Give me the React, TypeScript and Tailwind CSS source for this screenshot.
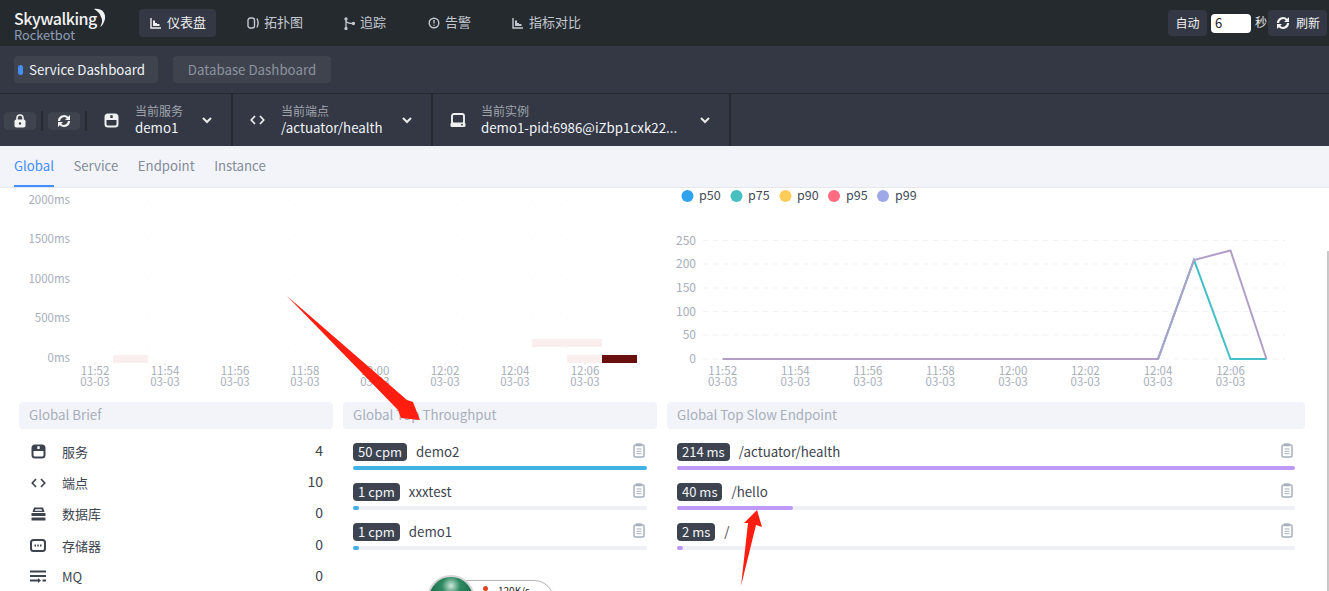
import React from "react";

const font = "font-['Noto_Sans_CJK_SC','Noto_Sans',sans-serif]";

const ChartIcon = () => (
  <svg width="12" height="12" viewBox="0 0 12 12" className="shrink-0" fill="none">
    <path d="M1 1v10h10" stroke="currentColor" strokeWidth="1.4" />
    <path d="M3 9V3.5h2V6h2v1h2.5v2z" fill="currentColor" />
  </svg>
);
const TopoIcon = () => (
  <svg width="12" height="12" viewBox="0 0 12 12" className="shrink-0" fill="none" stroke="currentColor" strokeWidth="1.4">
    <rect x="1" y="1" width="6.5" height="10" rx="2.2" />
    <path d="M10 1.5c1.2 2.5 1.2 6.5 0 9" />
  </svg>
);
const TraceIcon = () => (
  <svg width="11" height="13" viewBox="0 0 11 13" className="shrink-0" fill="none" stroke="currentColor" strokeWidth="1.3">
    <path d="M2 1v11M2 4c1 2 4 2.500 7 2.500" />
    <circle cx="2" cy="2" r="1" fill="currentColor" />
    <circle cx="2" cy="11.500" r="1" fill="currentColor" />
    <circle cx="9.500" cy="6.500" r="1" fill="currentColor" />
  </svg>
);
const AlertIcon = () => (
  <svg width="12" height="12" viewBox="0 0 12 12" className="shrink-0" fill="none" stroke="currentColor" strokeWidth="1.4">
    <circle cx="6" cy="6" r="4.800" />
    <path d="M6 3v3.500M6 7.800v1" />
  </svg>
);
const RefreshIcon = ({ size = 14 }: { size?: number }) => (
  <svg width={size} height={size} viewBox="0 0 14 14" className="shrink-0" fill="none" stroke="currentColor" strokeWidth="2.200">
    <path d="M2 7a5 5 0 0 1 8.500-3.500L12 5" />
    <path d="M12 7a5 5 0 0 1-8.500 3.500L2 9" />
    <path d="M13 1v5H8z" fill="currentColor" stroke="none" />
    <path d="M1 13V8h5z" fill="currentColor" stroke="none" />
  </svg>
);
const LockIcon = () => (
  <svg width="12" height="14" viewBox="0 0 12 14" fill="none">
    <path d="M3 6V4a3 3 0 0 1 6 0v2" stroke="currentColor" strokeWidth="1.600" />
    <rect x="0.500" y="5.500" width="11" height="8" rx="1.800" fill="currentColor" />
    <circle cx="6" cy="9.500" r="1.200" fill="#3e434e" />
  </svg>
);
const ServiceIcon = () => (
  <svg width="15" height="15" viewBox="0 0 15 15" fill="none" className="shrink-0">
    <path
      fillRule="evenodd"
      clipRule="evenodd"
      fill="currentColor"
      d="M4 0.500h7a3.500 3.500 0 0 1 3.500 3.500v7a3.500 3.500 0 0 1-3.500 3.500H4A3.500 3.500 0 0 1 .5 11V4A3.500 3.500 0 0 1 4 .5zM6.300 2.300v2.700h2.400v-2.700zM2.500 7v4A1.500 1.500 0 0 0 4 12.500h7A1.500 1.500 0 0 0 12.500 11V7z"
    />
  </svg>
);
const CodeIcon = () => (
  <svg width="15" height="10" viewBox="0 0 15 10" fill="none" stroke="currentColor" strokeWidth="1.700" className="shrink-0">
    <path d="M5 1 1.300 5 5 9M10 1l3.700 4L10 9" />
  </svg>
);
const InstanceIcon = () => (
  <svg width="16" height="15" viewBox="0 0 16 15" fill="none" className="shrink-0">
    <rect x="2" y="1" width="12" height="10" rx="2" stroke="currentColor" strokeWidth="1.900" />
    <rect x="0.500" y="9.500" width="15" height="4.500" rx="1.500" fill="currentColor" />
    <circle cx="12" cy="11.700" r="0.900" fill="#333844" />
  </svg>
);
const DatabaseIcon = () => (
  <svg width="15" height="14" viewBox="0 0 15 14" fill="currentColor" className="shrink-0">
    <path d="M3 0.500h9l1.500 4.500h-12z" />
    <rect x="0.500" y="6" width="14" height="3" rx="0.500" />
    <rect x="0.500" y="10.500" width="14" height="3" rx="0.500" />
    <path d="M4.500 2.200h6l.6 1.500H3.900z" fill="#fff" />
  </svg>
);
const StorageIcon = () => (
  <svg width="16" height="13" viewBox="0 0 16 13" fill="none" className="shrink-0">
    <rect x="1" y="1" width="14" height="11" rx="2.500" stroke="currentColor" strokeWidth="2" />
    <path d="M4.500 6.500h1.500M7.300 6.500h1.500M10 6.500h1.500" stroke="currentColor" strokeWidth="1.800" />
  </svg>
);
const MqIcon = () => (
  <svg width="16" height="13" viewBox="0 0 16 13" fill="currentColor" className="shrink-0">
    <rect x="0" y="0.500" width="16" height="2" />
    <rect x="0" y="5" width="16" height="2" />
    <rect x="0" y="9.500" width="8.500" height="2" />
    <path d="M8 8l3 2.500L8 13z" />
    <rect x="12.500" y="9.500" width="3.500" height="2" />
  </svg>
);
const ClipIcon = () => (
  <svg width="12" height="15" viewBox="0 0 12 15" fill="none" stroke="#a7aebb" className="shrink-0">
    <rect x="1" y="2" width="10" height="12" rx="1.500" strokeWidth="1.500" />
    <rect x="3.500" y="0.700" width="5" height="2.300" fill="#a7aebb" strokeWidth="0.500" />
    <path d="M3.500 6h5M3.500 8.300h5M3.500 10.600h5" strokeWidth="1" />
  </svg>
);
const Chevron = () => (
  <svg width="10" height="7" viewBox="0 0 10 7" fill="none" stroke="currentColor" strokeWidth="2" className="shrink-0">
    <path d="M1 1l4 4 4-4" />
  </svg>
);

const navs = [
  { label: "仪表盘", icon: <ChartIcon />, active: true, cls: "w-[77px] mr-[20px]" },
  { label: "拓扑图", icon: <TopoIcon />, active: false, cls: "w-[78px] mr-[19px]" },
  { label: "追踪", icon: <TraceIcon />, active: false, cls: "w-[66px] mr-[18px]" },
  { label: "告警", icon: <AlertIcon />, active: false, cls: "w-[66px] mr-[18px]" },
  { label: "指标对比", icon: <ChartIcon />, active: false, cls: "w-[92px]" },
];

function TopBar() {
  return (
    <div className="flex h-[46px] items-center bg-[#252a2f] text-[13px] leading-[18px] text-[#c4c8d0]">
      <div className="relative ml-[14px] h-[46px] w-[125px] shrink-0">
        <div className="absolute left-0 top-[6px] text-[16px] font-medium leading-[24px] tracking-[-0.5px] text-[#f2f2f2]">Skywalking</div>
        <svg className="absolute left-[76px] top-[8px]" width="17" height="21" viewBox="0 0 17 21">
          <path d="M4 1c7-1 12 3 11 10-1 4-3 7-5 8 2-3 3-7 1-10C10 5 7 3 4 1z" fill="#f2f2f2" />
        </svg>
        <div className="absolute left-0 top-[26px] text-[12.800px] leading-[17px] text-[#8e9eb6]">Rocketbot</div>
      </div>
      {navs.map((n) => (
        <div
          key={n.label}
          className={`flex h-[28px] shrink-0 items-center gap-[5px] rounded pl-[11px] ${n.cls} ${n.active ? "bg-[#333844] text-[#eeeeee]" : ""}`}
        >
          {n.icon}
          <span className="-translate-y-[1px]">{n.label}</span>
        </div>
      ))}
      <div className="ml-auto flex items-center pr-[2px]">
        <div className="flex h-[26px] w-[39px] items-center justify-center rounded bg-[#333844] text-[12px] text-[#f2f2f2]">自动</div>
        <div className="ml-[4px] flex h-[19px] w-[40px] items-center rounded-sm bg-white pl-[4px] text-[13px] text-[#222]">6</div>
        <span className="ml-[4px] w-[13px] -translate-y-[1px] text-[12px] text-[#e5e5e5]">秒</span>
        <div className="flex h-[26px] w-[59px] items-center gap-[6px] rounded bg-[#333844] pl-[8px] text-[12px] text-[#f2f2f2]">
          <RefreshIcon />
          <span>刷新</span>
        </div>
      </div>
    </div>
  );
}

function DashTabs() {
  return (
    <div className="flex h-[47px] items-center gap-[15px] bg-[#333844] pl-[14px] text-[13.300px] leading-[20px]">
      <div className="flex h-[27px] w-[144px] items-center rounded bg-[#3e434e] pl-[4px] text-[#f2f5fa]">
        <span className="mr-[6px] h-[10px] w-[5px] rounded-sm bg-[#448dfe]" />
        <span>Service Dashboard</span>
      </div>
      <div className="flex h-[27px] w-[158px] items-center justify-center rounded bg-[#3e434e] text-[#8d939e]">Database Dashboard</div>
    </div>
  );
}

function Selector({ icon, label, value, w, pl, textW }: { icon: React.ReactNode; label: string; value: string; w: string; pl: string; textW?: string }) {
  return (
    <div className={`flex h-full shrink-0 items-center border-r-2 border-[#252a2f] ${w} ${pl}`}>
      <div className="flex w-[31px] shrink-0 items-center text-[#f0f0f0]">{icon}</div>
      <div className={`flex flex-col whitespace-nowrap pb-[2px] ${textW ?? ""}`}>
        <span className="text-[12px] leading-[16px] text-[#a0a5ae]">{label}</span>
        <span className="text-[13.300px] leading-[17px] text-[#f2f5fa]">{value}</span>
      </div>
      <span className="ml-auto mr-[19px] text-[#e8e8e8]">
        <Chevron />
      </span>
    </div>
  );
}

function SelectorBar() {
  return (
    <div className="flex h-[53px] border-t border-[#252a2f] bg-[#333844]">
      <div className="flex w-[104px] shrink-0 items-center pl-[4px] pt-[1px]">
        <div className="flex h-[18px] w-[32px] items-center justify-center rounded bg-[#3e434e] text-[#f2f2f2]">
          <LockIcon />
        </div>
        <div className="mx-[5px] h-[20px] w-[2px] bg-[#252a2f]" />
        <div className="flex h-[18px] w-[32px] items-center justify-center rounded bg-[#3e434e] text-[#f2f2f2]">
          <RefreshIcon />
        </div>
        <div className="ml-[5px] h-[20px] w-[2px] bg-[#252a2f]" />
      </div>
      <Selector icon={<ServiceIcon />} label="当前服务" value="demo1" w="w-[129px]" pl="pl-0" />
      <Selector icon={<CodeIcon />} label="当前端点" value="/actuator/health" w="w-[200px]" pl="pl-[17px]" />
      <Selector icon={<InstanceIcon />} label="当前实例" value="demo1-pid:6986@iZbp1cxk22..." w="w-[298px]" pl="pl-[17px]" textW="w-[199px]" />
    </div>
  );
}

function PageTabs() {
  const tabs = ["Global", "Service", "Endpoint", "Instance"];
  return (
    <div className="flex h-[42px] gap-[19.500px] border-b border-[#e6e7ec] bg-[#f3f4f9] pl-[14px] text-[13.200px] leading-[20px] text-[#838b99]">
      {tabs.map((t, i) => (
        <div key={t} className={`flex h-[41px] items-center ${i === 0 ? "border-b-2 border-[#448dfe] text-[#448dfe]" : "pb-[2px]"}`}>
          {t}
        </div>
      ))}
    </div>
  );
}

const axisFill = "#a7aebb";

function AxisX({ xs, ticks }: { xs: number[]; ticks?: boolean }) {
  const labels = ["11:52", "11:54", "11:56", "11:58", "12:00", "12:02", "12:04", "12:06"];
  return (
    <>
      {xs.map((x, i) => (
        <g key={x} fontSize="11.500" fill={axisFill} textAnchor="middle">
          {ticks && <line x1={x} x2={x} y1="363" y2="365" stroke="#dcdfe6" />}
          <text x={x} y="375">{labels[i]}</text>
          <text x={x} y="386">03-03</text>
        </g>
      ))}
    </>
  );
}

function HeatChart() {
  const rows: [string, number][] = [["2000ms", 204], ["1500ms", 243], ["1000ms", 283], ["500ms", 322], ["0ms", 362]];
  const cols = [113, 148, 218, 288, 358, 393, 463, 498, 532, 567, 602];
  return (
    <svg viewBox="19 188 638 212" width="638" height="212" className="block">
      {[200, 239, 279, 318, 347].map((y) =>
        cols.map((x) => <rect key={`${x}-${y}`} x={x} y={y} width="1" height="1" fill="#f4f4f4" />)
      )}
      {rows.map(([t, y]) => (
        <text key={t} x="70" y={y} fontSize="11.500" fill={axisFill} textAnchor="end">{t}</text>
      ))}
      <rect x="113" y="355" width="35" height="8" fill="#fbeeee" />
      <rect x="532" y="339" width="70" height="8" fill="#fbeeee" />
      <rect x="567" y="355" width="35" height="8" fill="#fbeeee" />
      <rect x="602" y="355" width="35" height="8" fill="#6a0f10" />
      <AxisX xs={[95, 165, 235, 305, 375, 445, 515, 585]} ticks />
    </svg>
  );
}

function LineChart() {
  const legend: [string, string, number, number][] = [
    ["p50", "#2fa3ee", 687.5, 699],
    ["p75", "#45bfc0", 736.5, 748],
    ["p90", "#ffcb59", 785.5, 797],
    ["p95", "#ff6b81", 834, 846],
    ["p99", "#9fa8e6", 883, 895],
  ];
  const rows: [string, number][] = [["250", 240.5], ["200", 264], ["150", 288], ["100", 311.5], ["50", 335], ["0", 359]];
  return (
    <svg viewBox="667 188 638 212" width="638" height="212" className="block">
      {legend.map(([t, c, cx, tx]) => (
        <g key={t}>
          <circle cx={cx} cy="196" r="6" fill={c} />
          <text x={tx} y="200" fontSize="12.500" fill="#444b57">{t}</text>
        </g>
      ))}
      {rows.map(([t, y]) => (
        <g key={t}>
          <line x1="703" x2="1285" y1={y} y2={y} stroke="#f0f1f4" strokeDasharray="5 5" />
          <text x="696" y={y + 4} fontSize="12" fill={axisFill} textAnchor="end">{t}</text>
        </g>
      ))}
      <polyline points="722.700,359 1158,359 1194,260 1230.500,359 1266.500,359" fill="none" stroke="#43bfc7" strokeWidth="2" />
      <polyline points="722.700,359 1158,359 1194,260 1230.500,250.500 1266.500,359" fill="none" stroke="#b29fc9" strokeWidth="2" />
      <AxisX xs={[722.7, 795.3, 868, 940.3, 1013, 1085.3, 1158, 1230.5]} />
    </svg>
  );
}

function CardHeader({ title }: { title: string }) {
  return <div className="flex h-[27px] items-center rounded-sm bg-[#f3f4f9] pb-[2px] pl-[10px] text-[13.300px] leading-[20px] text-[#a7aebb]">{title}</div>;
}

function Brief() {
  const rows = [
    { icon: <ServiceIcon />, label: "服务", value: "4", cls: "pl-[12px]" },
    { icon: <CodeIcon />, label: "端点", value: "10", cls: "pl-[12px]" },
    { icon: <DatabaseIcon />, label: "数据库", value: "0", cls: "pl-[12px]" },
    { icon: <StorageIcon />, label: "存储器", value: "0", cls: "pl-[11px]" },
    { icon: <MqIcon />, label: "MQ", value: "0", cls: "pl-[11px]" },
  ];
  return (
    <div>
      <CardHeader title="Global Brief" />
      <div className="flex flex-col pt-[7px] text-[14px] leading-[20px] text-[#3d444f]">
        {rows.map((r) => (
          <div key={r.label} className={`flex h-[31.300px] items-center pr-[10px] ${r.cls}`}>
            <div className={`flex shrink-0 items-center text-[#3d444f] ${r.cls === "pl-[12px]" ? "w-[31px]" : "w-[32px]"}`}>{r.icon}</div>
            <span className="text-[13px]">{r.label}</span>
            <span className="ml-auto -translate-y-[2px] text-[14px]">{r.value}</span>
          </div>
        ))}
      </div>
    </div>
  );
}

function TopList({ title, color, items }: { title: string; color: string; items: { tag: string; name: string; pct: string }[] }) {
  return (
    <div>
      <CardHeader title={title} />
      <div className="flex flex-col gap-[13px] px-[10px] pt-[14px]">
        {items.map((it) => (
          <div key={it.name}>
            <div className="flex h-[18px] items-center text-[13.300px] leading-[18px] text-[#3d444f]">
              <span className="mr-[9px] flex h-[18px] items-center rounded bg-[#3d444f] px-[5px] text-[13px] text-[#f2f5fa]">{it.tag}</span>
              <span>{it.name}</span>
              <span className="ml-auto -translate-x-[2px] -translate-y-[2px]">
                <ClipIcon />
              </span>
            </div>
            <div className="mt-[5px] h-[4px] rounded-sm bg-[#eff0f6]">
              <div className="h-full rounded-sm" style={{ width: it.pct, backgroundColor: color }} />
            </div>
          </div>
        ))}
      </div>
    </div>
  );
}

export default function App() {
  return (
    <div className={`relative h-[591px] w-[1329px] overflow-hidden bg-white ${font}`}>
      <TopBar />
      <DashTabs />
      <SelectorBar />
      <PageTabs />
      <div className="grid grid-cols-[314px_314px_638px] gap-x-[10px] pl-[19px]">
        <div className="col-span-2 h-[214px]">
          <HeatChart />
        </div>
        <div className="h-[214px]">
          <LineChart />
        </div>
        <Brief />
        <TopList
          title="Global Top Throughput"
          color="#3fb1e3"
          items={[
            { tag: "50 cpm", name: "demo2", pct: "100%" },
            { tag: "1 cpm", name: "xxxtest", pct: "2%" },
            { tag: "1 cpm", name: "demo1", pct: "2%" },
          ]}
        />
        <TopList
          title="Global Top Slow Endpoint"
          color="#bf99f8"
          items={[
            { tag: "214 ms", name: "/actuator/health", pct: "100%" },
            { tag: "40 ms", name: "/hello", pct: "18.800%" },
            { tag: "2 ms", name: "/", pct: "1%" },
          ]}
        />
      </div>

      {/* floating network-speed widget, cropped by the window */}
      <div className="absolute left-[448px] top-[580px] h-[40px] w-[106px] rounded-[20px] border border-[#b5b5b5] bg-white shadow-sm">
        <span className="absolute left-[34px] top-[5px] h-[5px] w-[5px] rounded-full bg-[#e0452c]" />
        <span className="absolute left-[49px] top-[4px] text-[10px] leading-[12px] text-[#222]">120K/s</span>
      </div>
      <div className="absolute left-[427px] top-[575px] h-[48px] w-[48px] rounded-full border-2 border-[#d5d5d5] bg-[radial-gradient(circle_at_50%_20%,#cfe9dc_0%,#2f8a63_22%,#146a45_60%)]" />

      {/* annotation arrows over the page */}
      <svg className="pointer-events-none absolute left-0 top-0" width="1329" height="591">
        <polygon points="287,296 407,400 413,402 420,420 401,418 398,410" fill="#ff1e10" />
        <polygon points="757,510 762,527 756,525 741,586 748,523 744,523" fill="#ff1e10" />
      </svg>

      <div className="absolute right-0 top-[251px] h-[340px] w-[2px] bg-[#c9c9c9]" />
    </div>
  );
}
